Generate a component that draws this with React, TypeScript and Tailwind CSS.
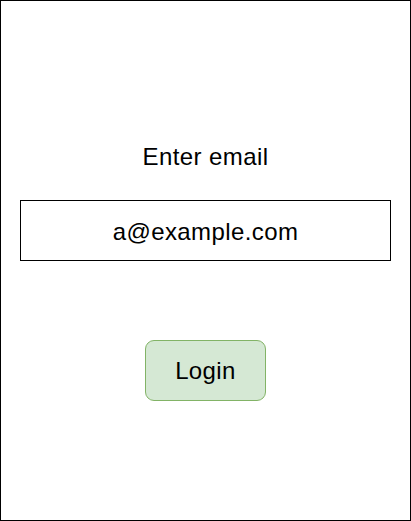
export default function App() {
  return (
    <div
      className="w-[411px] h-[521px] border border-black bg-white flex flex-col items-center text-black"
      style={{ fontFamily: '"Liberation Sans", Arial, sans-serif' }}
    >
      <div className="mt-[142px] h-[28px] leading-[28px] text-[24px] tracking-[0.4px]">Enter email</div>
      <div className="mt-[29px] w-[371px] h-[61px] border border-black flex items-center justify-center text-[24px] leading-[28px] tracking-[0.4px] pt-[2px]">
        a@example.com
      </div>
      <button className="mt-[79px] w-[121px] h-[61px] rounded-[9px] border border-[#82b366] bg-[#d5e8d4] flex items-center justify-center text-[24px] leading-[28px] tracking-[0.4px]">
        Login
      </button>
    </div>
  );
}
